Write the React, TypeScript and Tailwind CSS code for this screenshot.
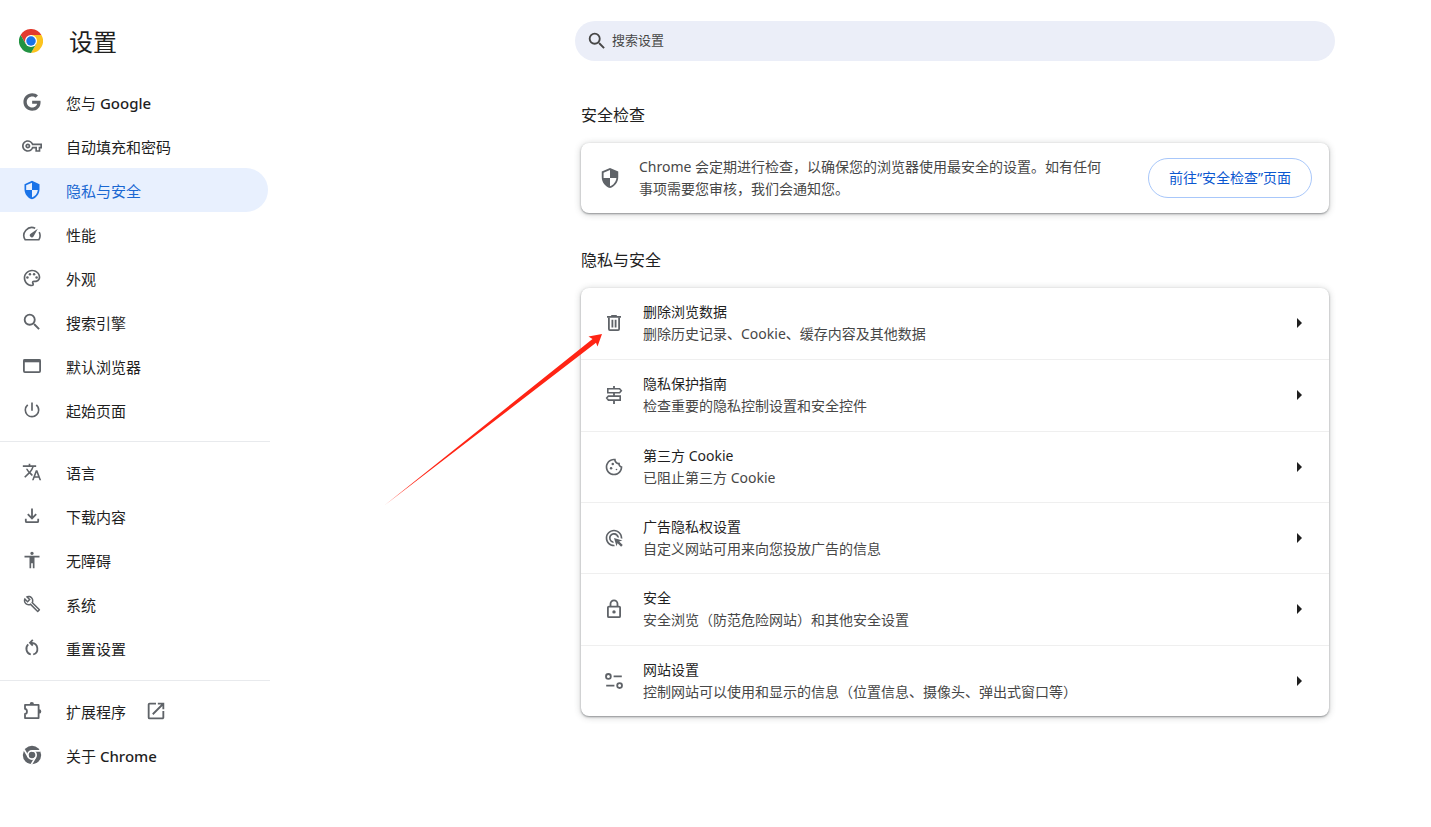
import type { ReactNode } from "react";
import {
  MdAccessibility,
  MdAdsClick,
  MdOpenInNew,
  MdOutlineBuild,
  MdOutlineCookie,
  MdOutlinePalette,
  MdOutlineVpnKey,
  MdPowerSettingsNew,
  MdSearch,
  MdSecurity,
  MdTranslate,
} from "react-icons/md";
import { FaGoogle } from "react-icons/fa";

type SvgProps = { children: ReactNode; className?: string };

function Line({ children, className = "size-5" }: SvgProps) {
  return (
    <svg viewBox="0 0 20 20" className={className} fill="none" stroke="currentColor" strokeWidth="1.8" aria-hidden="true">
      {children}
    </svg>
  );
}

const Gauge = () => (
  <Line>
    <path d="M13.2 4.2A8 8 0 0 0 3.1 15.7h13.8a8 8 0 0 0 .3-7.6" strokeWidth="1.6" />
    <path d="M15.8 4.8 11.8 12a2 2 0 1 1-3.2-2.2z" fill="currentColor" stroke="none" />
  </Line>
);

const BrowserWindow = () => (
  <Line>
    <rect x="1.9" y="3.9" width="16.2" height="12.2" rx="1" />
    <path d="M1.5 4.8h17" strokeWidth="3" />
  </Line>
);

const Download = () => (
  <Line>
    <path d="M10 2.5v9.6M5.8 8.2l4.2 4.2 4.2-4.2M3.8 12.8v2.4c0 .6.4 1 1 1h10.4c.6 0 1-.4 1-1v-2.4" />
  </Line>
);

const Reset = () => (
  <Line>
    <path d="M6.2 6.4a6 6 0 0 0 2.6 10.1M11.2 16.5a6 6 0 0 0-1.4-11.7H8.4" />
    <path d="M10.8 1.8 8 4.7l2.8 2.8" />
  </Line>
);

const Puzzle = () => (
  <Line>
    <path d="M3 3.9h13.6v13.2H3v-4.1c2.6-.3 2.6-4.8 0-5.1z" strokeLinejoin="round" />
    <path d="M7.6 3.5a2.2 2.4 0 0 1 4.4 0zM17 8.2a2.3 2.2 0 0 1 0 4.4z" fill="currentColor" stroke="none" />
  </Line>
);

const ChromeMono = () => (
  <svg viewBox="0 0 24 24" className="size-5" aria-hidden="true">
    <circle cx="12" cy="12" r="11" fill="currentColor" />
    <circle cx="12" cy="12" r="5" fill="none" stroke="#fff" strokeWidth="2" />
    <path d="M12 7h10.2M7.7 14.500 2.600 5.700M16.300 14.500l-5.100 8.800" stroke="#fff" strokeWidth="2" />
  </svg>
);

const ChromeLogo = () => (
  <svg viewBox="0 0 48 48" className="mt-0.5 size-6" aria-hidden="true">
    <path d="M24 12h20.8A24 24 0 0 0 3.2 12l10.4 18z" fill="#e33b2e" />
    <path d="M34.4 30 24 48A24 24 0 0 0 44.8 12H24z" fill="#fcc31e" />
    <path d="M13.6 30 3.2 12A24 24 0 0 0 24 48l10.4-18z" fill="#229342" />
    <circle cx="24" cy="24" r="12" fill="#fff" />
    <circle cx="24" cy="24" r="9.5" fill="#1a73e8" />
  </svg>
);

const Trash = () => (
  <Line>
    <path d="M3 3.9h14M7.2 2.900h5.600" />
    <path d="M4.900 4.500v11.600c0 .6.4 1 1 1h8.200c.6 0 1-.4 1-1V4.500M8.400 6.800v7.800M11.600 6.800v7.800" />
  </Line>
);

const Signpost = () => (
  <Line>
    <path d="M10 1v2.6M10 8v3M10 15.2V19" />
    <path d="M3.8 3.8h11.8l1.7 2-1.7 2H3.8zM16.2 11.1H4.4l-1.7 2 1.700 2h11.800z" strokeWidth="1.6" />
  </Line>
);

const Lock = () => (
  <Line>
    <rect x="3.9" y="7.6" width="12.2" height="10.6" rx="1" />
    <path d="M6.5 7.5V4.8a3.5 3.5 0 0 1 7 0v2.7" />
    <circle cx="10" cy="12.9" r="1.7" fill="currentColor" stroke="none" />
  </Line>
);

const Tune = () => (
  <Line>
    <circle cx="4.4" cy="5.4" r="2.4" />
    <circle cx="15.6" cy="14.600" r="2.400" />
    <path d="M9.600 5.400h8.200M2.200 14.600h8.200" />
  </Line>
);

type NavItem = { icon: ReactNode; label: ReactNode; active?: boolean; external?: boolean };

const groups: NavItem[][] = [
  [
    { icon: <FaGoogle className="size-[18px]" />, label: <>您与 <span className="font-medium">Google</span></> },
    { icon: <MdOutlineVpnKey className="size-5" />, label: "自动填充和密码" },
    { icon: <MdSecurity className="size-5" />, label: "隐私与安全", active: true },
    { icon: <Gauge />, label: "性能" },
    { icon: <MdOutlinePalette className="size-5" />, label: "外观" },
    { icon: <MdSearch className="size-[22px] shrink-0" />, label: "搜索引擎" },
    { icon: <BrowserWindow />, label: "默认浏览器" },
    { icon: <MdPowerSettingsNew className="size-5" />, label: "起始页面" },
  ],
  [
    { icon: <MdTranslate className="size-5" />, label: "语言" },
    { icon: <Download />, label: "下载内容" },
    { icon: <MdAccessibility className="size-5" />, label: "无障碍" },
    { icon: <MdOutlineBuild className="size-[18px]" />, label: "系统" },
    { icon: <Reset />, label: "重置设置" },
  ],
  [
    { icon: <Puzzle />, label: "扩展程序", external: true },
    { icon: <ChromeMono />, label: <>关于 <span className="font-medium">Chrome</span></> },
  ],
];

const rows = [
  { icon: <Trash />, title: "删除浏览数据", text: "删除历史记录、Cookie、缓存内容及其他数据" },
  { icon: <Signpost />, title: "隐私保护指南", text: "检查重要的隐私控制设置和安全控件" },
  { icon: <MdOutlineCookie className="size-5" />, title: "第三方 Cookie", text: "已阻止第三方 Cookie" },
  { icon: <MdAdsClick className="size-5" />, title: "广告隐私权设置", text: "自定义网站可用来向您投放广告的信息" },
  { icon: <Lock />, title: "安全", text: "安全浏览（防范危险网站）和其他安全设置" },
  { icon: <Tune />, title: "网站设置", text: "控制网站可以使用和显示的信息（位置信息、摄像头、弹出式窗口等）" },
];

const cardStyle = "rounded-lg bg-white shadow-[0_1px_2px_rgba(60,64,67,0.5),0_1px_6px_1px_rgba(60,64,67,0.2)]";

export default function App() {
  return (
    <div className="relative flex min-h-screen bg-white font-['Noto_Sans','Noto_Sans_CJK_SC',sans-serif] text-[#1f1f1f]">
      <aside className="w-[270px] shrink-0">
        <header className="flex h-20 items-center gap-[26px] pl-[19px]">
          <ChromeLogo />
          <h1 className="pt-1 text-2xl leading-8">设置</h1>
        </header>
        <nav aria-label="设置">
          {groups.map((items, index) => (
            <ul key={index} className="border-[#e8eaed] pb-[9px] not-first:border-t not-first:pt-2 nth-2:pb-2.5">
              {items.map((item, i) => (
                <li key={i}>
                  <a
                    href="#"
                    aria-current={item.active ? "page" : undefined}
                    className={`mr-0.5 flex h-11 items-center rounded-r-full pl-[22px] text-[15px] leading-5 ${
                      item.active ? "bg-[#e8f0fe] text-[#1967d2]" : ""
                    }`}
                  >
                    <span
                      key={index}
                      className={`flex w-5 justify-center ${item.active ? "text-[#1a73e8]" : "text-[#5f6368]"}`}
                    >
                      {item.icon}
                    </span>
                    <span className="ml-6 pt-0.5">{item.label}</span>
                    {item.external && <MdOpenInNew className="ml-[19px] size-[22px] text-[#5f6368]" />}
                  </a>
                </li>
              ))}
            </ul>
          ))}
        </nav>
      </aside>

      <main className="flex-1 pl-[209px] pt-[21px]">
        <label className="mx-auto flex h-10 max-w-[760px] items-center rounded-full bg-[#ebeef8] pl-[11px] text-[13px] text-[#474747]">
          <MdSearch className="size-[22px] shrink-0" />
          <input
            type="search"
            aria-label="搜索设置"
            placeholder="搜索设置"
            className="min-w-0 flex-1 bg-transparent pl-1 outline-none placeholder:text-[#474747]"
          />
        </label>

        <div className="mx-auto max-w-[748px]">
          <section>
            <h2 className="pb-4 pt-[42px] text-base leading-6">安全检查</h2>
            <div className={`flex min-h-[70px] items-center pl-[18px] pr-[17px] ${cardStyle}`}>
              <MdSecurity className="size-[22px] shrink-0 text-[#5f6368]" />
              <p className="ml-[18px] flex-1 pr-9 text-sm leading-[22px] text-[#474747]">
                Chrome 会定期进行检查，以确保您的浏览器使用最安全的设置。如有任何事项需要您审核，我们会通知您。
              </p>
              <button
                type="button"
                className="h-10 w-[164px] shrink-0 rounded-full border border-[#a8c7fa] text-sm text-[#0b57d0]"
              >
                前往“安全检查”页面
              </button>
            </div>
          </section>

          <section>
            <h2 className="pb-4 pt-[35px] text-base leading-6">隐私与安全</h2>
            <ul className={`grid min-h-[428px] auto-rows-fr ${cardStyle}`}>
              {rows.map((row) => (
                <li key={row.title} className="border-t border-[#efefef] first:border-t-0 first:pb-px">
                  <button type="button" className="flex h-full w-full items-center pl-[23px] pr-[27px] text-left text-sm leading-[22px]">
                    <span className="mr-[19px] w-5 shrink-0 text-[#5f6368]">{row.icon}</span>
                    <span className="flex-1">
                      <span className="block">{row.title}</span>
                      <span className="block text-[#474747]">{row.text}</span>
                    </span>
                    <svg viewBox="0 0 5 10" className="h-2.5 w-[5px]" fill="#1f1f1f" aria-hidden="true">
                      <path d="M0 0l5 5-5 5z" />
                    </svg>
                  </button>
                </li>
              ))}
            </ul>
          </section>
        </div>
      </main>

      <svg
        viewBox="0 0 220 172"
        className="pointer-events-none absolute left-[384px] top-[333px] h-[172px] w-[220px]"
        aria-hidden="true"
      >
        <path d="M1 172 208.500 6 204.500 3.500 218 1 213.500 13.500 212 9.800z" fill="#ff2414" />
      </svg>
    </div>
  );
}
